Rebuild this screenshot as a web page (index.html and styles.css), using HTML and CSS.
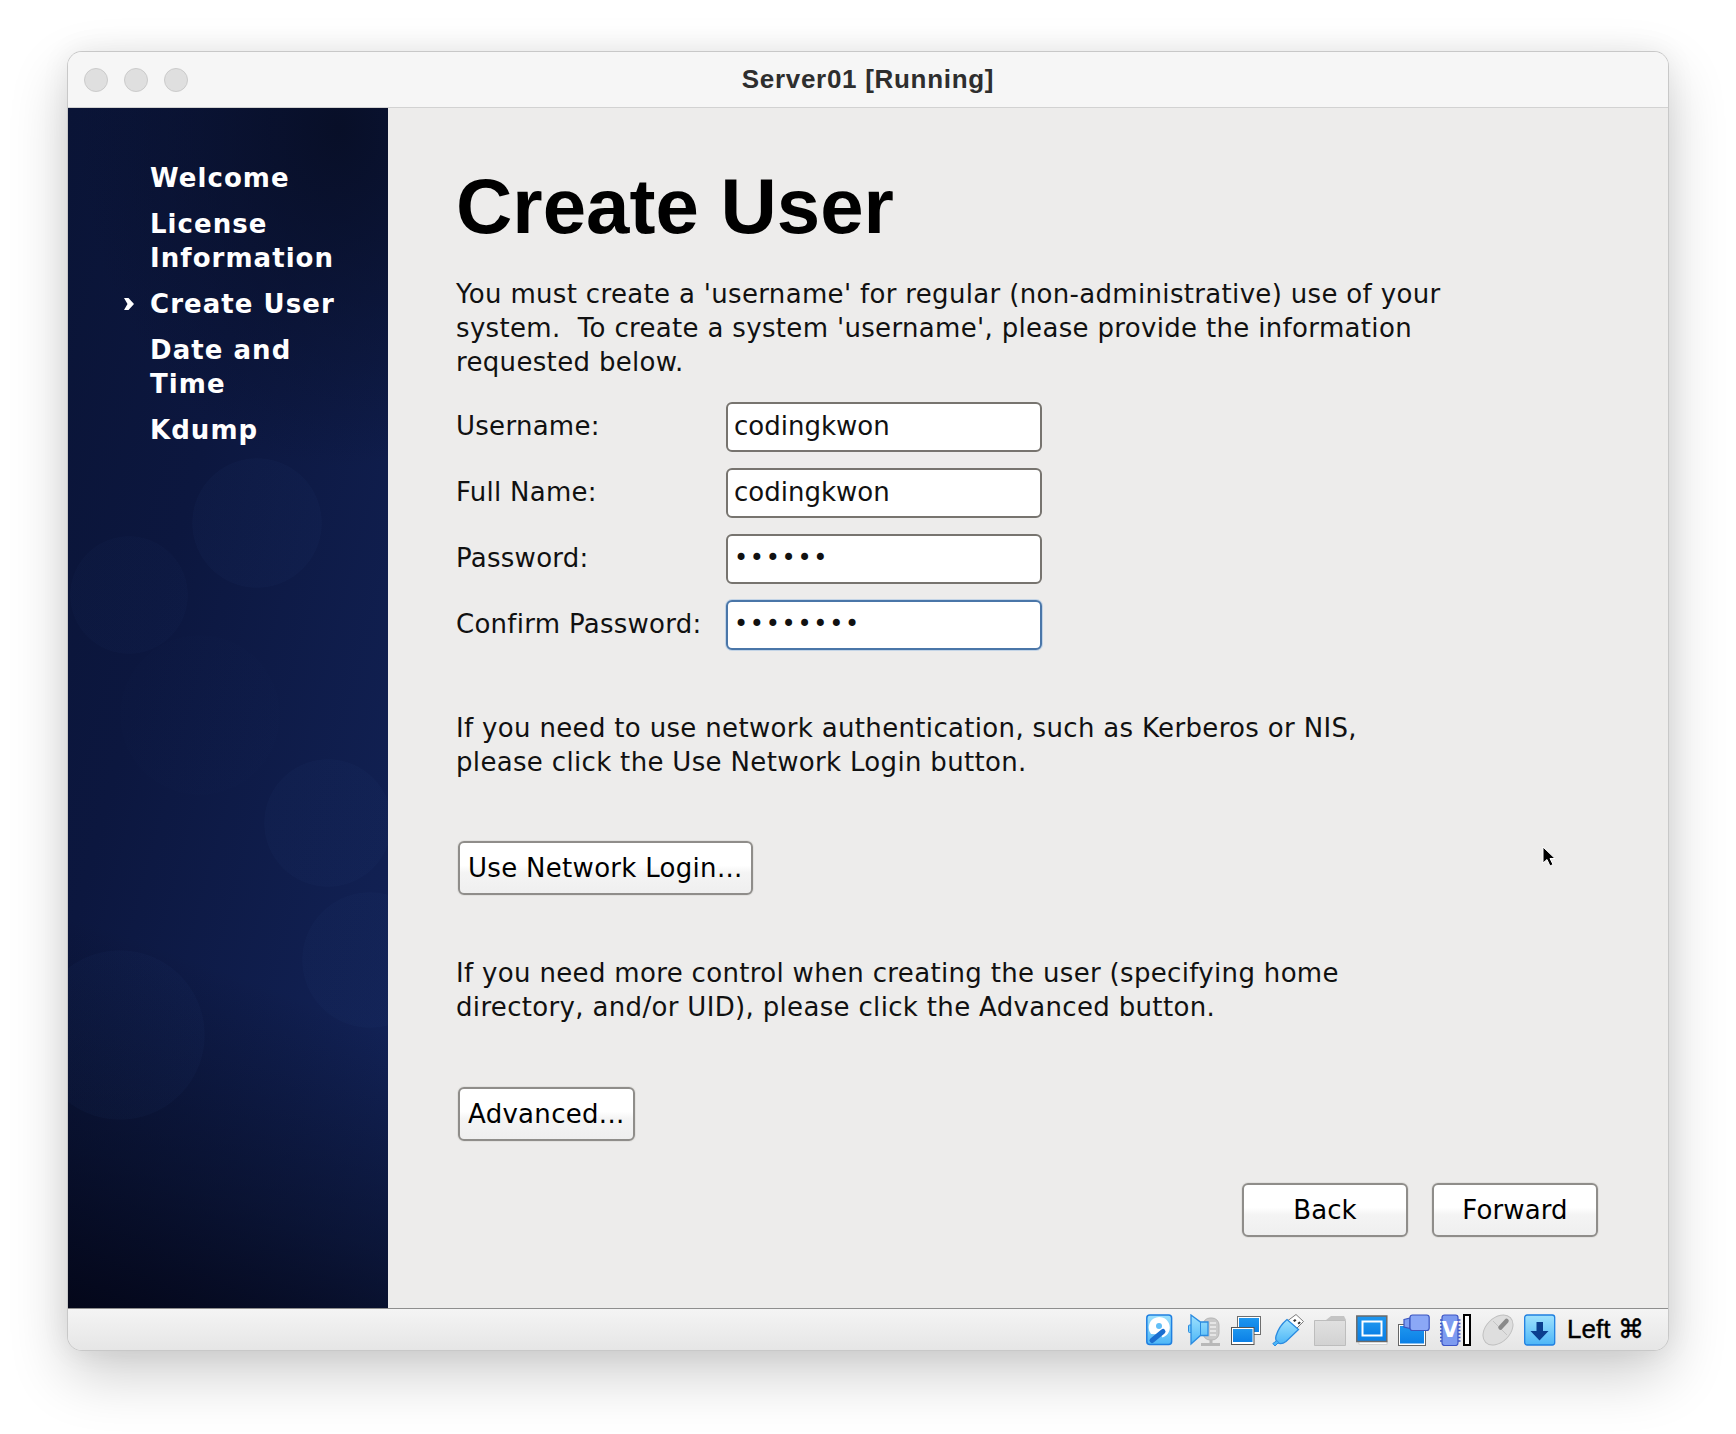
FILE: index.html
```html
<!DOCTYPE html>
<html lang="en">
<head>
<meta charset="utf-8">
<title>Server01 [Running]</title>
<link rel="stylesheet" href="styles.css">
</head>
<body>
<div class="window">
  <header class="titlebar">
    <div class="lights"><span class="light"></span><span class="light"></span><span class="light"></span></div>
    <div class="title">Server01 [Running]</div>
  </header>
  <div class="guest">
    <nav class="sidebar">
      <div class="nav-item">Welcome</div>
      <div class="nav-item">License<br>Information</div>
      <div class="nav-item current">Create User</div>
      <div class="nav-item">Date and<br>Time</div>
      <div class="nav-item">Kdump</div>
    </nav>
    <main class="content">
      <h1 class="heading">Create User</h1>
      <p class="para intro">You must create a 'username' for regular (non-administrative) use of your<br>system.  To create a system 'username', please provide the information<br>requested below.</p>
      <div class="form">
        <label class="label">Username:</label><div class="field">codingkwon</div>
        <label class="label">Full Name:</label><div class="field">codingkwon</div>
        <label class="label">Password:</label><div class="field dots">••••••</div>
        <label class="label">Confirm Password:</label><div class="field dots focus">••••••••</div>
      </div>
      <p class="para net">If you need to use network authentication, such as Kerberos or NIS,<br>please click the Use Network Login button.</p>
      <button class="btn small net-btn">Use Network Login...</button>
      <p class="para adv">If you need more control when creating the user (specifying home<br>directory, and/or UID), please click the Advanced button.</p>
      <button class="btn small adv-btn">Advanced...</button>
      <div class="actions">
        <button class="btn wide">Back</button>
        <button class="btn wide">Forward</button>
      </div>
      <svg class="cursor" width="14" height="22" viewBox="0 0 14 22"><path d="M1 1v16l4-3.500 3 6.500 3-1.500-3-6h5z" fill="#000" stroke="#fff" stroke-width="1"/></svg>
    </main>
  </div>
  <footer class="statusbar">
    <svg class="ico" viewBox="0 0 32 32"><defs><linearGradient id="sky" x1="0" y1="0" x2="0" y2="1"><stop offset="0" stop-color="#1e96ee"/><stop offset="1" stop-color="#0a7fe6"/></linearGradient><linearGradient id="pale" x1="0" y1="0" x2="0" y2="1"><stop offset="0" stop-color="#9fe2fd"/><stop offset="1" stop-color="#4db6f7"/></linearGradient><linearGradient id="gry" x1="0" y1="0" x2="0" y2="1"><stop offset="0" stop-color="#e0e0e0"/><stop offset="1" stop-color="#d2d2d2"/></linearGradient></defs>
      <rect x=".8" y="1" width="24.800" height="29.500" rx="3" fill="url(#pale)" stroke="#1f7fe0" stroke-width="1.500"/><path d="M5 20a10.500 10.500 0 1 1 11.500 3.500l-2-3z" fill="#fff"/><circle cx="13" cy="12" r="3" fill="#62bff7"/><path d="M6 26.500L17 17.500" stroke="#1b6fd0" stroke-width="5" stroke-linecap="round"/></svg>
    <svg class="ico" viewBox="0 0 32 32"><rect x="15" y="4" width="16" height="22" rx="7" fill="#c9c9c9" stroke="#b5b5b5"/><path d="M23 26v3M13 30.500h20" stroke="#b8b8b8" stroke-width="3"/><path d="M22 9h6M22 13h6M22 17h6M22 21h6" stroke="#eee" stroke-width="1.500"/><rect x=".5" y="11" width="3.500" height="7.500" rx="1" fill="#79d0fb" stroke="#2a8be0"/><path d="M3 1l9.500 7H20v13.500h-7.500L3 30z" fill="url(#pale)" stroke="#2a8be0" stroke-width="1.300"/><path d="M12.500 8v13.500" stroke="#2a8be0"/></svg>
    <svg class="ico" viewBox="0 0 32 32"><rect x="7.500" y="2.500" width="23" height="18" fill="#fff" stroke="#6e6e6e"/><rect x="9" y="4" width="20" height="14" fill="url(#sky)"/><rect x="1.500" y="13.500" width="22.500" height="17" fill="#fff" stroke="#555"/><rect x="3" y="15" width="19.500" height="13" fill="url(#sky)"/></svg>
    <svg class="ico" viewBox="0 0 32 32"><path d="M16 6.500L24 .5 31.500 7.500 24 15z" fill="#fff" stroke="#7b7b7b"/><path d="M21 6.500l2-1.500 1.500 1.500-2 1.500zM25.500 9l2-1.500 1.300 1.300-2 1.700z" fill="#333"/><path d="M15 5.500L26.500 15.500 14 27.500Q9 31 5.500 28.500 3 26 4 22 7 12 15 5.500z" fill="url(#pale)" stroke="#2a8be0" stroke-width="1.300"/><path d="M5 26.500L.8 29.500 3 32 6.500 28.500z" fill="#4db6f7" stroke="#2a8be0"/></svg>
    <svg class="ico" viewBox="0 0 32 32"><path d="M12 6L17 2H30L32 6z" fill="#c4c4c4"/><path d="M.5 6.500h31v25H.5z" fill="url(#gry)" stroke="#bdbdbd"/></svg>
    <svg class="ico" viewBox="0 0 32 32"><rect x="3" y="27" width="28" height="3.500" fill="#fff" stroke="#bbb" stroke-width=".6"/><rect x=".8" y="2" width="30" height="25.500" fill="url(#sky)" stroke="#6a6a6a" stroke-width="1.500"/><rect x="6.500" y="7.500" width="19" height="14" fill="url(#sky)" stroke="#fff" stroke-width="2"/></svg>
    <svg class="ico" viewBox="0 0 32 32"><rect x=".5" y="10.500" width="27" height="21" fill="#fff" stroke="#666"/><rect x="2" y="12" width="24" height="17.500" fill="url(#sky)"/><path d="M6 5.500l6-1.500v10.500l-6-1.500z" fill="#7d9ef2" stroke="#3a55c0" stroke-width="1.200"/><rect x="12" y="1" width="19.200" height="15.500" rx="2.500" fill="#8ba8f6" stroke="#3a55c0" stroke-width="1.200"/></svg>
    <svg class="ico" viewBox="0 0 32 32"><path d="M0 6h3M0 9.500h3M0 13h3M0 16.500h3M0 20h3M0 23.500h3M0 27h3M17 6h3.500M17 9.500h3.500M17 13h3.500M17 16.500h3.500M17 20h3.500M17 23.500h3.500M17 27h3.500" stroke="#3d55c5" stroke-width="1.500"/><rect x="2" y="1" width="16" height="30.500" rx="2.500" fill="#7d9bf0" stroke="#3d55c5" stroke-width="1.200"/><text class="vtext" x="10" y="23">V</text><rect x="24" y="1" width="6" height="30" fill="#fff" stroke="#000" stroke-width="2"/></svg>
    <svg class="ico" viewBox="0 0 32 32"><ellipse cx="16" cy="16" rx="12" ry="17.500" transform="rotate(45 16 16)" fill="#dedede" stroke="#bfbfbf"/><path d="M11 7l14 14" stroke="#c4c4c4" fill="none"/><path d="M18.500 13.500l6-6.500" stroke="#8a8a8a" stroke-width="4.500" stroke-linecap="round"/></svg>
    <svg class="ico" viewBox="0 0 32 32"><rect x=".7" y="1" width="30" height="30" rx="2.500" fill="url(#pale)" stroke="#1f7fe0" stroke-width="1.300"/><path d="M12.500 8h6.500v9h5.500l-9 9.500-9-9.500h6z" fill="#0b3f8f"/></svg>
    <span class="hostkey">Left ⌘</span>
  </footer>
</div>
</body>
</html>
```
FILE: styles.css
```css
* { box-sizing: border-box; }
html, body { margin: 0; height: 100%; background: #fff; }
body { padding: 52px 68px 0; font-family: "DejaVu Sans", sans-serif; }
.window {
  width: 1600px; height: 1298px; border-radius: 14px; overflow: hidden;
  display: flex; flex-direction: column; background: #f5f5f5;
  box-shadow: 0 0 0 1px #c8c8c8, 0 24px 60px rgba(0,0,0,.2), 0 0 30px rgba(0,0,0,.07);
}
.titlebar { height: 56px; flex: none; display: flex; align-items: center; position: relative; background: #f6f6f6; border-bottom: 1px solid #d2d2d2; padding-left: 16px; }
.lights { display: flex; gap: 16px; }
.light { width: 24px; height: 24px; border-radius: 50%; background: #dfdfdf; border: 1px solid #cbcbcb; }
.title { position: absolute; left: 0; right: 0; top: 0; text-align: center; font: 700 26px/54px "Liberation Sans", sans-serif; letter-spacing: .7px; color: #2e2e2e; }
.guest { flex: none; height: 1200px; display: flex; }
.sidebar {
  width: 320px; flex: none; padding: 53px 0 0 82px; color: #fff; font-weight: 700; font-size: 26px; line-height: 34px;
  background:
    radial-gradient(circle 65px at 189px 415px, rgba(40,70,130,.07) 99%, transparent 100%),
    radial-gradient(circle 59px at 61px 487px, rgba(40,70,130,.05) 99%, transparent 100%),
    radial-gradient(circle 64px at 260px 715px, rgba(40,70,130,.07) 99%, transparent 100%),
    radial-gradient(circle 68px at 302px 852px, rgba(40,70,130,.07) 99%, transparent 100%),
    radial-gradient(circle 85px at 52px 927px, rgba(40,70,130,.07) 99%, transparent 100%),
    radial-gradient(circle 80px at 132px 607px, rgba(40,70,130,.015) 99%, transparent 100%),
    linear-gradient(200deg, rgba(4,8,24,0) 70%, rgba(4,8,24,.5) 87%, #04071a 100%),
    radial-gradient(ellipse 260px 340px at 270px 20px, #080f28 0%, rgba(8,15,40,0) 100%),
    linear-gradient(105deg, #0a1436 0%, #0c173f 35%, #13245a 100%);
}
.nav-item { margin-bottom: 12px; letter-spacing: 1.05px; position: relative; }
.current::before { content: ""; position: absolute; left: -26px; top: 11px; width: 10px; height: 12px; background: #fff; clip-path: polygon(0 0, 45% 0, 100% 50%, 45% 100%, 0 100%, 35% 50%); }
.content { flex: 1; background: #edeceb; padding: 0 70px 0 68px; position: relative; display: flex; flex-direction: column; align-items: flex-start; color: #000; }
.heading { margin: 53px 0 0; font: 700 78px/90px "Liberation Sans", sans-serif; }
.para { margin: 0; font-size: 26px; line-height: 34px; letter-spacing: .33px; white-space: pre-wrap; color: #111; }
.intro { margin-top: 26px; }
.form { display: grid; grid-template-columns: 270px 316px; row-gap: 16px; margin-top: 23px; align-items: center; }
.label { font-size: 26px; line-height: 34px; letter-spacing: .27px; color: #111; transform: translateY(-1px); }
.field { height: 50px; border: 2px solid #77746f; border-radius: 6px; background: #fff; padding: 0 6px; font-size: 26px; line-height: 44px; color: #111; }
.dots { font-size: 24px; letter-spacing: 1.7px; line-height: 44px; }
.focus { border-color: #4a76a8; box-shadow: 0 0 0 1px #c3d4e6; }
.net { margin-top: 61px; }
.adv { margin-top: 61px; }
.btn { font-family: "DejaVu Sans", sans-serif; font-size: 26px; letter-spacing: .3px; color: #000; background: linear-gradient(#fff 0 45%, #f4f4f4 60%, #efefef); border: 2px solid #8f8d8a; border-radius: 6px; height: 54px; padding: 0 8px; box-shadow: 0 0 0 1px #e2e1df; }
.small { margin-left: 2px; }
.net-btn { margin-top: 62px; }
.adv-btn { margin-top: 63px; }
.actions { display: flex; gap: 24px; margin-top: 42px; align-self: flex-end; }
.wide { width: 166px; letter-spacing: .1px; }
.cursor { position: absolute; left: 1154px; top: 738px; }
.statusbar { flex: 1; display: flex; align-items: center; justify-content: flex-end; gap: 10px; padding: 0 24px 0 0; border-top: 1px solid #8e8e8e; background: linear-gradient(#f4f4f4, #e6e6e6); }
.ico { width: 32px; height: 32px; flex: none; }
.vtext { font: 700 21px "DejaVu Sans", sans-serif; fill: #fff; text-anchor: middle; }
.hostkey { width: 77px; white-space: nowrap; font: 500 26px "Liberation Sans", sans-serif; -webkit-text-stroke: .4px #000; color: #000; margin-left: 1px; }
```
